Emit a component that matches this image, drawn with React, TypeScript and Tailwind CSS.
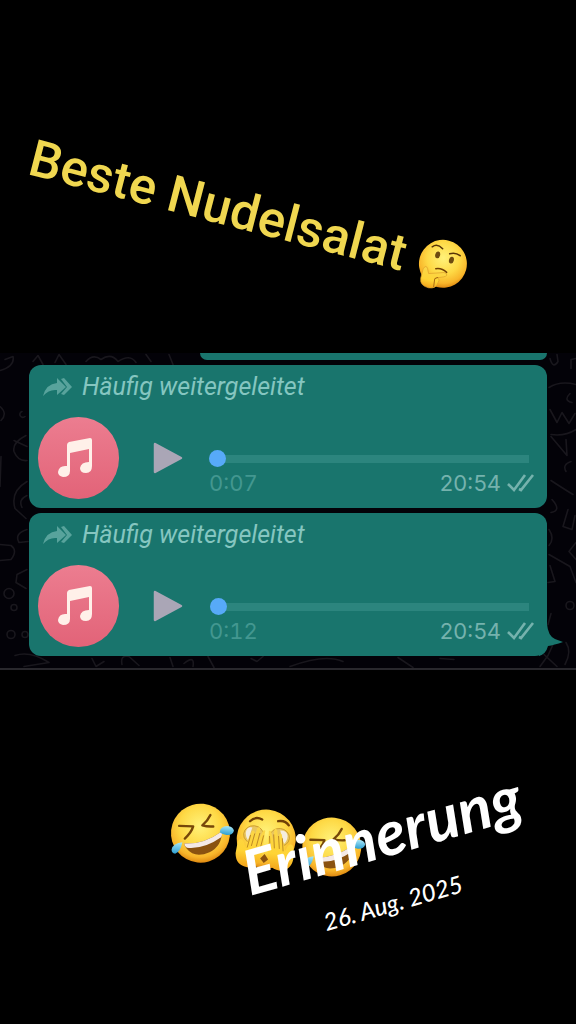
import { useId } from "react";
import type { ReactNode } from "react";

function EmojiBase({ className, label, children }: { className: string; label: string; children: (id: string) => ReactNode }) {
  const id = useId();
  return (
    <svg viewBox="0 0 64 64" role="img" aria-label={label} className={className} overflow="visible">
      <defs>
        <radialGradient id={id + "f"} cx="0.48" cy="0.38" r="0.62">
          <stop offset="0" stopColor="#fff27a" />
          <stop offset="0.55" stopColor="#fed945" />
          <stop offset="0.85" stopColor="#f8b52a" />
          <stop offset="1" stopColor="#df8a12" />
        </radialGradient>
        <linearGradient id={id + "h"} x1="0" y1="0" x2="0" y2="1">
          <stop offset="0" stopColor="#fbd64a" />
          <stop offset="0.6" stopColor="#ffd435" />
          <stop offset="1" stopColor="#f2a31b" />
        </linearGradient>
        <linearGradient id={id + "t"} x1="0" y1="0" x2="0" y2="1">
          <stop offset="0" stopColor="#a9e7f8" />
          <stop offset="1" stopColor="#2d9fd3" />
        </linearGradient>
      </defs>
      {children(id)}
    </svg>
  );
}

function Laughing() {
  return (
    <EmojiBase className="h-16 w-16 shrink-0" label="Lachendes Gesicht">
      {(id) => (
        <>
          <circle cx="32" cy="32" r="29.5" fill={`url(#${id}f)`} />
          <path d="M10 27 L24 26 Q23 32 17 39 M40 13 Q38 19 33 24 Q38 25 44 24" fill="none" stroke="#764709" strokeWidth="2.4" strokeLinecap="round" strokeLinejoin="round" />
          <path d="M17 44 Q36 43 53 28 Q55 42 43 50 Q29 58 20 49 Q17 46 17 44Z" fill="#8a5210" />
          <path d="M17 44 Q36 43 53 28 Q54 31 53 34 Q37 48 20 48 Q17 46 17 44Z" fill="#f4e9e6" />
          <path d="M51 29 Q51 23 58 22 Q64 22 65 26 Q64 31 58 31 Q54 31 51 29Z" fill={`url(#${id}t)`} />
          <path d="M15 43 Q6 45 5 51 Q5 55 9 55 Q14 53 15 43Z" fill={`url(#${id}t)`} />
        </>
      )}
    </EmojiBase>
  );
}

function Peeking() {
  return (
    <EmojiBase className="h-16 w-16 shrink-0" label="Durch die Finger schauendes Gesicht">
      {(id) => (
        <>
          <circle cx="32" cy="31" r="29.5" fill={`url(#${id}f)`} />
          <path d="M14 15 Q19 9 26 12 M42 12 Q49 10 53 15" fill="none" stroke="#704006" strokeWidth="2.3" strokeLinecap="round" />
          <ellipse cx="19" cy="28" rx="10" ry="9" fill="#e9c65d" stroke="#c7942a" strokeWidth="0.8" />
          <ellipse cx="45" cy="28" rx="10" ry="9" fill="#e9c65d" stroke="#c7942a" strokeWidth="0.8" />
          <path d="M11 26 Q12 20 17 21 L14 34 Q11 31 11 26Z M53 26 Q52 20 45 21 L50 34 Q53 31 53 26Z" fill="#f4eddf" />
          <path d="M4 36 Q7 31 10 36 L12 41 L17 25 Q19 22 20 26 L19 35 L22 21 Q25 18 25 23 L24 34 L28 23 Q31 21 30 25 L29 47 Q28 60 16 61 Q4 60 3 48Z" fill={`url(#${id}h)`} />
          <path d="M60 36 Q57 31 54 36 L52 41 L47 25 Q45 22 44 26 L45 35 L42 21 Q39 18 39 23 L40 34 L36 23 Q33 21 34 25 L35 47 Q36 60 48 61 Q60 60 61 48Z" fill={`url(#${id}h)`} />
          <path d="M16 29 L14 41 M20 27 L18 39 M25 26 L23 39 M29 28 L27 41 M48 29 L50 41 M44 27 L46 39 M39 26 L41 39 M35 28 L37 41" fill="none" stroke="#b98523" strokeWidth="0.9" strokeLinecap="round" />
          <path d="M28 51 L32 46 L36 51 L32 55Z" fill="#8a5210" />
        </>
      )}
    </EmojiBase>
  );
}

function Thinking() {
  return (
    <EmojiBase className="h-[52px] w-[52px] shrink-0" label="Nachdenkliches Gesicht">
      {(id) => (
        <>
          <circle cx="32" cy="32" r="29.5" fill={`url(#${id}f)`} />
          <path d="M14 15 Q19 9 27 14 M37 18 Q43 14 50 17" fill="none" stroke="#573407" strokeWidth="1.9" strokeLinecap="round" />
          <ellipse cx="23" cy="23" rx="3" ry="4.2" fill="#6d4a10" />
          <ellipse cx="41" cy="25" rx="3" ry="4.2" fill="#6d4a10" />
          <path d="M25 40 Q32 37 39 41" fill="none" stroke="#704006" strokeWidth="1.9" strokeLinecap="round" />
          <path d="M10 44 Q12 38 15 42 L18 48 L36 42 Q41 42 40 45 Q39 47 30 50 Q34 52 32 56 Q32 64 22 65 Q11 65 10 56Z" fill={`url(#${id}h)`} stroke="#dfa02a" strokeWidth="0.8" />
          <path d="M30 50 Q26 52 27 54 L28 62" fill="none" stroke="#a76913" strokeWidth="1.2" strokeLinecap="round" />
        </>
      )}
    </EmojiBase>
  );
}

function Wallpaper() {
  return (
    <svg viewBox="0 0 576 316" preserveAspectRatio="xMidYMid slice" aria-hidden="true" className="absolute inset-0 h-full w-full">
      <g fill="none" stroke="#19171d" strokeWidth="1.6" strokeLinecap="round" strokeLinejoin="round">
        <path d="M0 18 Q15 14 13 4 L5 7 M33 9 L38 3 L43 12 M55 10 L59 2 L66 12 M86 9 Q93 1 101 7 Q111 0 118 9 Q130 1 136 10 M146 2 L151 9 M169 2 L173 12" />
        <path d="M0 54 Q8 61 1 68 M22 59 a3 3 0 1 0 3 5 M26 83 Q12 90 14 99 Q18 109 27 108 M14 88 L27 94 M0 134 L1 104 M27 129 Q10 139 15 156 L26 166 M27 143 Q18 147 22 155" />
        <path d="M27 177 Q14 181 19 190 L28 189 M0 192 L11 193 Q18 198 11 207 L0 208 M27 217 L17 222 L16 230 L26 236" />
        <circle cx="9" cy="241" r="5" /><circle cx="14" cy="255" r="3" /><circle cx="11" cy="282" r="4" /><circle cx="25" cy="282" r="3" />
        <path d="M15 303 Q30 298 49 310 L24 314 M92 306 L96 314 L104 309 M122 312 Q120 302 129 304 L139 313 M170 305 L173 314 M184 311 Q195 302 193 314 M208 304 L214 315 M251 306 L257 309 L263 304 M290 314 Q325 301 343 309 M398 305 L413 315 M440 306 L454 307" />
        <path d="M550 6 Q553 17 558 9 L557 2 M571 7 L576 6 M571 7 L571 16 M549 35 Q560 28 576 32 M570 41 q-7 7 2 9 M550 57 L557 70 L562 60 L569 71 L575 61 M551 82 Q565 84 576 77 M551 84 L567 103 L566 87 M571 109 q-9 3 -5 10 M551 128 Q560 134 573 142 M552 147 Q562 158 551 160" />
        <path d="M568 157 L563 174 L572 177 L575 163 M549 177 Q555 186 549 193 M576 190 L569 199 L576 207 M549 202 L570 214 L576 230 M550 213 L555 229 L548 230" />
        <circle cx="570" cy="253" r="4" />
        <path d="M551 261 L548 272 M540 314 L548 303 L553 292 M566 290 Q572 299 565 312 M544 302 L557 314" />
      </g>
    </svg>
  );
}

function ForwardIcon() {
  return (
    <svg viewBox="0 0 31 20" aria-hidden="true" className="h-5 w-[31px] fill-[#58a39c]">
      <path d="M0 19 Q3 7 14 6 L14 1 L23 10 L14 18 L14 13 Q6 12 0 19Z" />
      <path d="M18 2 L21 1 L29 10 L21 18 L18 17 L24 10Z" />
    </svg>
  );
}

function VoiceMessage({ elapsed, seconds, last = false }: { elapsed: string; seconds: number; last?: boolean }) {
  return (
    <article className="relative h-[143px] rounded-xl bg-[#19756d] pt-[6px] pr-3 pl-[9px] font-['Inter','Liberation_Sans',sans-serif]">
      <p className="flex h-8 items-center gap-2 pl-[5px] font-['Roboto','Liberation_Sans',sans-serif] text-[25px] text-[#85c6c0] italic">
        <ForwardIcon />
        Häufig weitergeleitet
      </p>
      <div className="mt-[14px] flex">
        <div className="flex h-[82px] w-[81px] shrink-0 items-center justify-center rounded-full bg-linear-to-b from-[#ec7d90] to-[#e26378] pr-[7px]">
          <svg viewBox="0 0 36 40" aria-hidden="true" className="h-10 w-9 fill-[#fff0e9]">
            <path d="M10 7 Q10 5 12 4 L33 0 Q35 0 35 2 L35 28 Q35 35 29 35 Q23 35 23 30 Q24 24 32 24 L32 11 L13 15 L13 33 Q13 39 6 39 Q1 38 1 34 Q2 27 10 28Z" />
          </svg>
        </div>
        <button type="button" aria-label="Abspielen" className="mt-[25px] ml-[34px] h-8 w-[30px] shrink-0">
          <svg viewBox="0 0 30 32" aria-hidden="true" className="h-8 w-[30px]">
            <path d="M2 2 L28 16 L2 30Z" fill="#aaa6b6" stroke="#aaa6b6" strokeWidth="2.5" strokeLinejoin="round" />
          </svg>
        </button>
        <div className="ml-[26px] min-w-0 flex-1 pt-[33px]">
          <div className="relative mr-[6px] flex h-[17px] items-center">
            <div className="ml-2 h-2 flex-1 bg-[#2c857e]" />
            <input
              type="range"
              min="0"
              max="7200"
              defaultValue={seconds}
              aria-label="Wiedergabeposition"
              className="absolute inset-0 m-0 h-[17px] w-full appearance-none bg-transparent [&::-webkit-slider-thumb]:h-[17px] [&::-webkit-slider-thumb]:w-[17px] [&::-webkit-slider-thumb]:appearance-none [&::-webkit-slider-thumb]:rounded-full [&::-webkit-slider-thumb]:bg-[#57aaf8]"
            />
          </div>
          <div className="mt-[2px] flex h-7 items-center text-[22px]">
            <span className="text-[#439790] tabular-nums">{elapsed}</span>
            <time className="ml-auto text-[#75b2ad]">20:54</time>
            <svg viewBox="0 0 28 20" aria-label="Zugestellt" className="ml-[6px] h-5 w-7 fill-none stroke-[#75b2ad] stroke-[2.6]">
              <path d="M1 11 L7 17 L18 2 M12 16 L14 17 L26 2" />
            </svg>
          </div>
        </div>
      </div>
      {last && (
        <svg viewBox="0 0 24 32" aria-hidden="true" className="absolute -right-4 bottom-0 h-8 w-6 fill-[#19756d]">
          <path d="M0 0 L8 0 Q9 12 16 15 L24 18 Q15 21 9 22 Q7 30 0 32Z" />
        </svg>
      )}
    </article>
  );
}

export default function App() {
  return (
    <main className="relative flex min-h-screen flex-col overflow-hidden bg-black pt-[353px]">
      <h1 className="absolute top-[132px] left-[37px] flex origin-top-left rotate-[14.5deg] items-center gap-3 font-['Roboto','Liberation_Sans',sans-serif] text-[51px] leading-[52px] font-medium whitespace-nowrap text-[#f0d750]">
        Beste Nudelsalat
        <Thinking />
      </h1>

      <section aria-label="Sprachnachrichten" className="relative border-b-2 border-[#29282d] bg-[#030208] px-[29px] pb-3">
        <Wallpaper />
        <div className="relative flex flex-col gap-[5px]">
          <div className="ml-[171px] h-[7px] rounded-b-lg bg-[#19756d]" />
          <VoiceMessage elapsed="0:07" seconds={7} />
          <VoiceMessage elapsed="0:12" seconds={12} last />
        </div>
      </section>

      <div className="absolute top-[798px] left-[172px] flex origin-top-left rotate-6 gap-[2px]">
        <Laughing />
        <Peeking />
        <Laughing />
      </div>
      <div className="absolute top-[844px] left-[235px] origin-top-left -rotate-16 font-['Lato','Liberation_Sans',sans-serif] whitespace-nowrap text-white italic">
        <h2 className="text-[62px] leading-[60px] font-bold">Erinnerung</h2>
        <p className="mt-6 pl-[64px] text-2xl leading-8 font-medium">26. Aug. 2025</p>
      </div>
    </main>
  );
}
